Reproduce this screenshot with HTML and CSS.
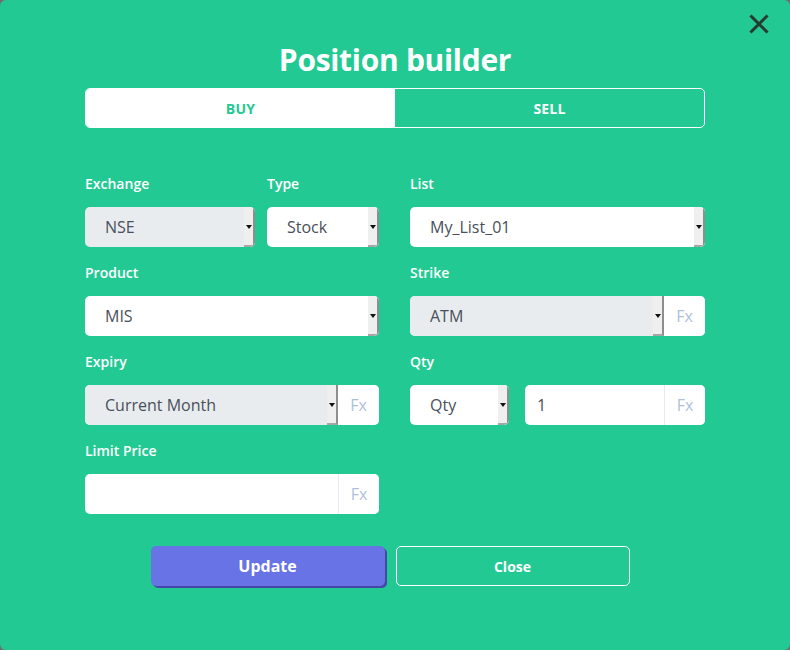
FILE: index.html
```html
<!DOCTYPE html>
<html>
<head>
<meta charset="utf-8">
<link rel="stylesheet" href="styles.css">
</head>
<body>
<div class="modal">
  <button class="close-x" aria-label="close">
    <svg width="20" height="20" viewBox="0 0 20 20"><path d="M2.5 2.5 L17.5 17.5 M17.5 2.5 L2.5 17.5" stroke="#263a32" stroke-width="3" stroke-linecap="square" fill="none"/></svg>
  </button>
  <h1 class="title">Position builder</h1>
  <div class="toggle">
    <div class="tab active">BUY</div>
    <div class="tab">SELL</div>
  </div>

  <div class="form">
    <div class="row">
      <div class="split">
        <div class="field w-exchange">
          <div class="label">Exchange</div>
          <div class="control gray"><span class="val">NSE</span><span class="arrow"></span></div>
        </div>
        <div class="field w-type">
          <div class="label">Type</div>
          <div class="control"><span class="val">Stock</span><span class="arrow"></span></div>
        </div>
      </div>
      <div class="field">
        <div class="label">List</div>
        <div class="control"><span class="val">My_List_01</span><span class="arrow"></span></div>
      </div>
    </div>

    <div class="row">
      <div class="field">
        <div class="label">Product</div>
        <div class="control"><span class="val">MIS</span><span class="arrow"></span></div>
      </div>
      <div class="field">
        <div class="label">Strike</div>
        <div class="control"><span class="sel gray"><span class="val">ATM</span><span class="arrow"></span></span><span class="fx">Fx</span></div>
      </div>
    </div>

    <div class="row">
      <div class="field">
        <div class="label">Expiry</div>
        <div class="control"><span class="sel gray"><span class="val">Current Month</span><span class="arrow"></span></span><span class="fx">Fx</span></div>
      </div>
      <div class="field">
        <div class="label">Qty</div>
        <div class="split qty">
          <div class="control w-qty"><span class="val">Qty</span><span class="arrow"></span></div>
          <div class="control grow"><span class="val num">1</span><span class="fx line">Fx</span></div>
        </div>
      </div>
    </div>

    <div class="row">
      <div class="field">
        <div class="label">Limit Price</div>
        <div class="control"><span class="val"></span><span class="fx line">Fx</span></div>
      </div>
      <div></div>
    </div>
  </div>

  <div class="actions">
    <button class="btn primary">Update</button>
    <button class="btn outline">Close</button>
  </div>
</div>
</body>
</html>
```

FILE: styles.css
```css
* { box-sizing: border-box; }
html, body { margin: 0; padding: 0; }
body {
  background: #6e6e6e;
  font-family: "Open Sans", "Liberation Sans", sans-serif;
}
.modal {
  position: relative;
  width: 790px;
  height: 650px;
  background: #23c993;
  border-radius: 6px;
  padding: 40px 85px 0 85px;
}
.close-x {
  position: absolute;
  top: 14px;
  right: 21px;
  width: 20px;
  height: 20px;
  padding: 0;
  border: 0;
  background: transparent;
  display: block;
}
.close-x svg { display: block; }
.title {
  margin: 0 0 8px 0;
  height: 40px;
  line-height: 40px;
  text-align: center;
  color: #fff;
  font-size: 30px;
  font-weight: 700;
  letter-spacing: -0.3px;
}
.toggle {
  display: flex;
  height: 40px;
  border: 1px solid #fff;
  border-radius: 5px;
  overflow: hidden;
}
.tab {
  flex: 1;
  display: flex;
  align-items: center;
  justify-content: center;
  color: #fff;
  font-size: 14px;
  font-weight: 700;
  letter-spacing: 0.2px;
}
.tab.active { background: #fff; color: #23c993; }

.form {
  margin-top: 46px;
  display: flex;
  flex-direction: column;
  gap: 16px;
}
.row {
  display: grid;
  grid-template-columns: 294px 295px;
  column-gap: 31px;
}
.split { display: flex; gap: 12px; }
.split.qty { gap: 16px; }
.w-exchange { width: 170px; }
.w-type { width: 112px; }
.w-qty { width: 99px; flex: none; }
.grow { flex: 1; }
.label {
  height: 20px;
  line-height: 20px;
  color: #fff;
  font-size: 14px;
  font-weight: 600;
  margin-bottom: 13px;
}
.control {
  display: flex;
  height: 40px;
  background: #fff;
  border-radius: 5px;
  overflow: hidden;
}
.control.gray, .sel.gray { background: #e9ecef; }
.sel { display: flex; flex: 1; }
.val {
  flex: 1;
  display: flex;
  align-items: center;
  padding-left: 20px;
  color: #4a5059;
  font-size: 16px;
}
.val.num { padding-left: 12px; }
.arrow {
  position: relative;
  width: 11px;
  flex: none;
  background: #efefef;
  border-right: 2px solid #8e8e8e;
  border-bottom: 2px solid #a6a6a6;
}
.arrow::after {
  content: "";
  position: absolute;
  left: 2px;
  top: 50%;
  margin-top: -1px;
  border-left: 3px solid transparent;
  border-right: 3px solid transparent;
  border-top: 4px solid #111;
}
.fx {
  width: 41px;
  flex: none;
  display: flex;
  align-items: center;
  justify-content: center;
  background: #fff;
  color: #aebfdc;
  font-size: 16px;
}
.fx.line { border-left: 1px solid #e6eaef; }

.actions {
  margin-top: 32px;
  display: flex;
  justify-content: center;
  gap: 11px;
  padding-right: 10px;
}
.btn {
  width: 234px;
  height: 40px;
  border-radius: 5px;
  font-family: inherit;
  font-weight: 700;
  color: #fff;
  cursor: pointer;
}
.btn.primary {
  background: #6873e5;
  border: 0;
  font-size: 16px;
  box-shadow: 2px 2px 0 #4448a8;
}
.btn.outline {
  background: transparent;
  border: 1px solid #fff;
  font-size: 14px;
}
```
